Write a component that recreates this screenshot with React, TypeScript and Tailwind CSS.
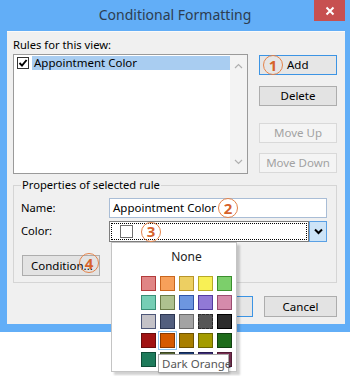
import React from "react";

const F = "font-['Noto_Sans',sans-serif]";

const swatches: [string, string][][] = [
  [["#e08585", "#b23b3b"], ["#f7a05a", "#c9661e"], ["#edcf62", "#b8952a"], ["#f8f055", "#b7aa26"], ["#7ccf6b", "#3b8f2e"]],
  [["#76ceb5", "#3a8f78"], ["#aec18f", "#6b7b47"], ["#6d96e0", "#2f55a8"], ["#9179d6", "#533ba0"], ["#d58bab", "#9b4d70"]],
  [["#c4c2c7", "#4e5778"], ["#525e7e", "#2c3652"], ["#a3a3a3", "#6b6b6b"], ["#565656", "#2a2a2a"], ["#2c2c2c", "#000000"]],
  [["#a11313", "#6a0c0c"], ["#d55a00", "#8a3a00"], ["#a87e00", "#6e5200"], ["#a49c00", "#6c6600"], ["#1f6c1b", "#114010"]],
  [["#1e7b5b", "#0f4d38"], ["#5b6a36", "#3a4522"], ["#1f3f7a", "#112550"], ["#3f2f7a", "#251a50"], ["#7a2f52", "#501c35"]],
];

function Badge({ n, className = "" }: { n: string; className?: string }) {
  return (
    <span
      className={
        "inline-flex items-center justify-center w-[20px] h-[20px] rounded-full border-[1.5px] border-[#e4834a] text-[#d6622b] font-bold text-[15px] leading-none shrink-0 " +
        className
      }
    >
      {n}
    </span>
  );
}

function Btn({
  children,
  variant = "normal",
  className = "",
}: {
  children: React.ReactNode;
  variant?: "normal" | "default" | "disabled";
  className?: string;
}) {
  const v =
    variant === "default"
      ? "border-[#3c94e4] bg-[#e6e6e6] text-black"
      : variant === "disabled"
      ? "border-[#d9d9d9] bg-[#f4f4f4] text-[#a2a2a2]"
      : "border-[#adadad] bg-[#e3e3e3] text-black";
  return (
    <div className={"h-[20px] border flex items-center justify-center text-[11.5px] leading-none whitespace-nowrap " + v + " " + className}>
      {children}
    </div>
  );
}

export default function App() {
  return (
    <div className={"relative w-[350px] h-[376px] bg-white overflow-hidden text-[11.2px] text-black " + F}>
      <div className="w-[350px] h-[332px] bg-[#62aef7] flex flex-col">
        {/* title bar */}
        <div className="h-[31px] grid grid-cols-[1fr_auto_1fr]">
          <div />
          <div className="pt-[5px] text-[14px] leading-[20px] text-[#2d3d50]">Conditional Formatting</div>
          <div className="flex justify-end pr-[5px]">
            <div className="w-[31px] h-[21px] bg-[#c75050] flex items-center justify-center">
              <svg width="10" height="10" viewBox="0 0 10 10">
                <path d="M1.5 1.5 L8.5 8.5 M8.5 1.5 L1.5 8.5" stroke="white" strokeWidth="2" />
              </svg>
            </div>
          </div>
        </div>

        {/* panel */}
        <div className="flex-1 ml-[7px] mr-[5px] mb-[8px] bg-[#f0f0f0] border-t border-[#fafafa] pt-[5px] pl-[6px] pr-[8px] flex flex-col">
          <div className="flex">
            <div className="w-[235px] flex flex-col">
              <div className="h-[16px] leading-[16px]">Rules for this view:</div>
              <div className="mt-[1px] h-[120px] border border-[#9a9a9a] bg-white flex">
                <div className="flex-1 pt-[1px] pl-[3px]">
                  <div className="flex items-center h-[14px]">
                    <div className="w-[12px] h-[12px] border border-[#333] bg-white flex items-center justify-center">
                      <svg width="10" height="10" viewBox="0 0 10 10">
                        <path d="M1.5 5 L4 7.6 L8.6 2" stroke="black" strokeWidth="1.9" fill="none" />
                      </svg>
                    </div>
                    <div className="ml-[3px] flex-1 h-[14px] bg-[#a9cdf1] pl-[2px] leading-[14px] text-[11.5px]">Appointment Color</div>
                  </div>
                </div>
                <div className="w-[17px] bg-[#f3f3f3] flex flex-col items-center justify-between py-[8px]">
                  <svg width="9" height="6" viewBox="0 0 9 6">
                    <path d="M1 5 L4.5 1.5 L8 5" stroke="#b0b0b0" strokeWidth="1.2" fill="none" />
                  </svg>
                  <svg width="9" height="6" viewBox="0 0 9 6">
                    <path d="M1 1 L4.5 4.5 L8 1" stroke="#b0b0b0" strokeWidth="1.2" fill="none" />
                  </svg>
                </div>
              </div>
            </div>
            <div className="ml-[11px] w-[78px] pt-[18px] flex flex-col">
              <Btn variant="default" className="justify-start pl-[3px]">
                <Badge n="1" />
                <span className="ml-[4px]">Add</span>
              </Btn>
              <Btn className="mt-[11px]">Delete</Btn>
              <Btn variant="disabled" className="mt-[17px]">Move Up</Btn>
              <Btn variant="disabled" className="mt-[10px]">Move Down</Btn>
            </div>
          </div>

          <fieldset className="mt-[3px] border border-[#d5d5d5] pl-[7px] pr-[8px] pb-[6px]">
            <legend className="px-[1px] leading-[16px]">Properties of selected rule</legend>
            <div className="mt-[5px] flex items-center">
              <div className="w-[88px]">Name:</div>
              <div className="w-[218px] h-[20px] border border-[#a9bdd6] bg-white flex items-center pl-[3px] text-[11.5px]">
                <span>Appointment Color</span>
                <Badge n="2" className="ml-[2px]" />
              </div>
            </div>
            <div className="mt-[3px] flex items-center">
              <div className="w-[88px]">Color:</div>
              <div className="w-[218px] h-[21px] flex">
                <div className="flex-1 border border-[#7d7d7d] bg-white p-[1px]">
                  <div className="h-full border border-dotted border-black flex items-center pl-[8px]">
                    <div className="w-[13px] h-[13px] border border-[#707070] bg-white" />
                    <Badge n="3" className="ml-[8px]" />
                  </div>
                </div>
                <div className="w-[18px] border border-[#5aa0e4] bg-[#cde4f7] flex items-center justify-center">
                  <svg width="9" height="7" viewBox="0 0 9 7">
                    <path d="M1 1.5 L4.5 5 L8 1.5" stroke="black" strokeWidth="2" fill="none" />
                  </svg>
                </div>
              </div>
            </div>
            <div className="mt-[13px] flex">
              <div className="relative ml-[1px]">
                <Btn className="w-[78px] h-[21px] justify-start pl-[8px]">Condition...</Btn>
                <Badge n="4" className="absolute left-[57px] top-[-2px]" />
              </div>
            </div>
          </fieldset>

          <div className="mt-[13px] flex justify-end gap-[11px]">
            <Btn variant="default" className="w-[73px] h-[21px]">OK</Btn>
            <Btn className="w-[73px] h-[21px]">Cancel</Btn>
          </div>
        </div>
      </div>

      {/* dropdown popup */}
      <div className="absolute left-[111px] top-[242px] w-[126px] h-[130px] bg-white border border-[#c4c4c4] shadow-[3px_3px_2px_rgba(0,0,0,0.18)] pl-[29px] pt-[6px]">
        <div className="w-[91px] text-center leading-[16px] text-[#222] text-[12px]">None</div>
        <div className="mt-[11px] grid grid-cols-[repeat(5,15px)] gap-[4px]">
          {swatches.flatMap((row, r) =>
            row.map(([bg, bd], c) => {
              const sel = r === 3 && c === 1;
              const dotted = r === 2 && c === 3;
              return (
                <div
                  key={r + "-" + c}
                  className={
                    "w-[15px] h-[15px] border " +
                    (dotted ? "border-dashed " : "") +
                    (sel ? "outline outline-1 outline-offset-[1px] outline-[#8ec5ee]" : "")
                  }
                  style={{ backgroundColor: bg, borderColor: bd }}
                />
              );
            })
          )}
        </div>
      </div>

      {/* tooltip */}
      <div className="absolute left-[158px] top-[354px] w-[71px] h-[19px] bg-white border border-[#a8a8a8] shadow-[1px_1px_2px_rgba(0,0,0,0.2)] flex items-center pl-[3px] text-[#575757] text-[11.5px] whitespace-nowrap">
        Dark Orange
      </div>
    </div>
  );
}
